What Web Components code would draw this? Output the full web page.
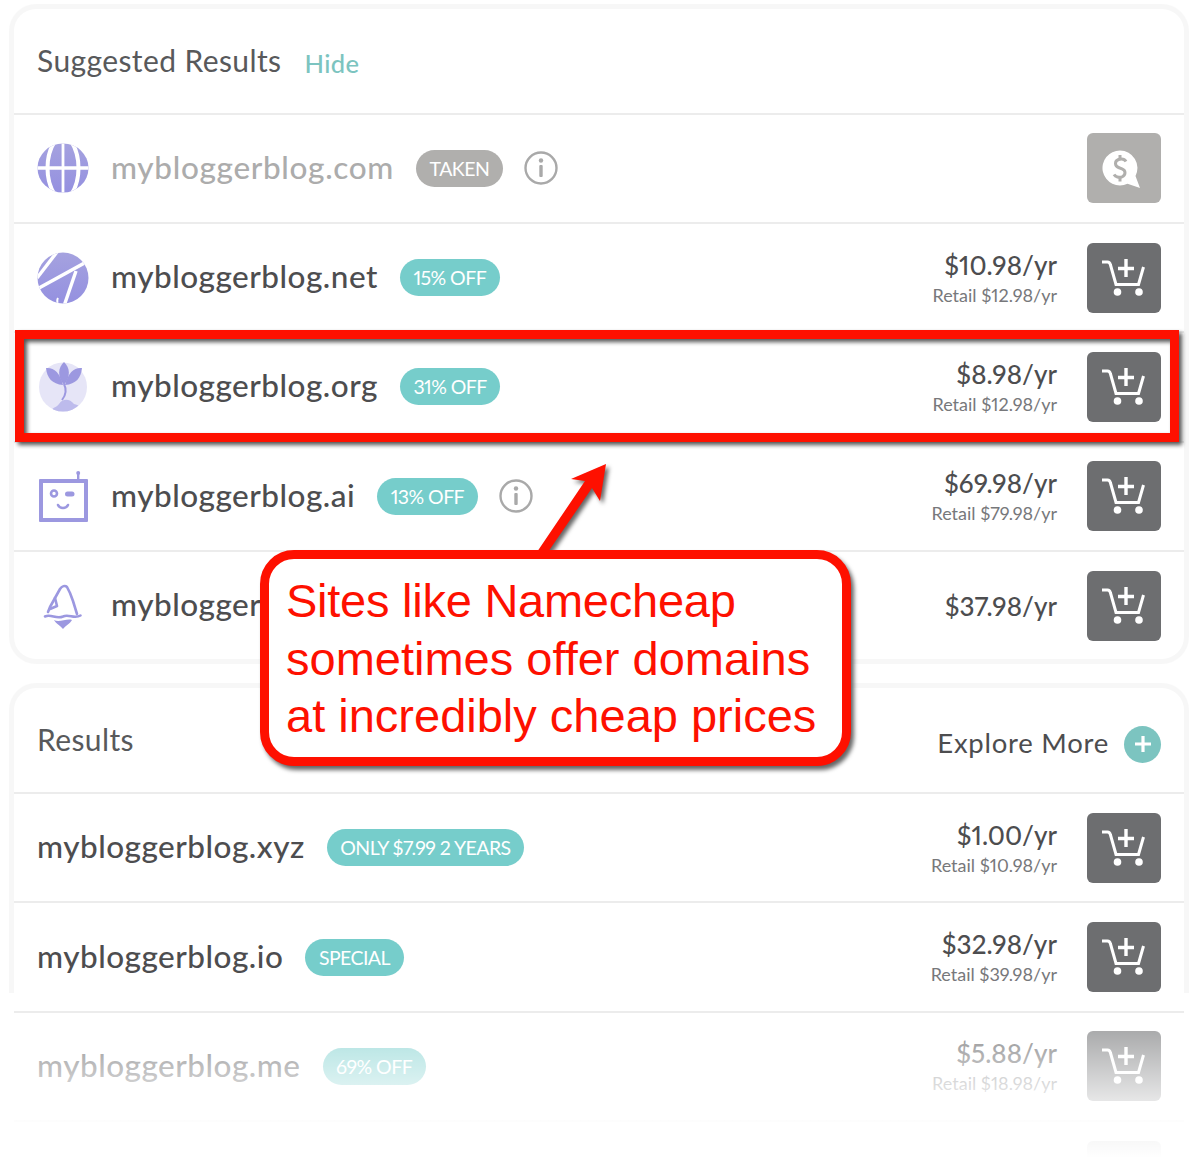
<!DOCTYPE html>
<html lang="en"><head><meta charset="utf-8"><title>Suggested Results</title>
<style>
html,body{margin:0;padding:0;background:#fff}
body{width:1200px;height:1176px;overflow:hidden;position:relative;font-family:Lato,"Open Sans",sans-serif;color:#4d4d4f}
</style></head><body>
<domain-page>
  <result-card>
    <card-head slot="head"><span>Suggested Results</span><a slot="aside">Hide</a></card-head>
    <domain-row logo="globe" name="mybloggerblog.com" pill="TAKEN" info taken></domain-row>
    <domain-row logo="slash" name="mybloggerblog.net" pill="15% OFF" price="$10.98/yr" retail="Retail $12.98/yr"></domain-row>
    <domain-row logo="plant" name="mybloggerblog.org" pill="31% OFF" price="$8.98/yr" retail="Retail $12.98/yr"></domain-row>
    <domain-row logo="bot" name="mybloggerblog.ai" pill="13% OFF" info price="$69.98/yr" retail="Retail $79.98/yr"></domain-row>
    <domain-row logo="berg" name="myblogger" price="$37.98/yr" last></domain-row>
  </result-card>
  <result-card second>
    <card-head slot="head" explore><span>Results</span></card-head>
    <domain-row name="mybloggerblog.xyz" pill="ONLY $7.99 2 YEARS" price="$1.00/yr" retail="Retail $10.98/yr"></domain-row>
    <domain-row name="mybloggerblog.io" pill="SPECIAL" price="$32.98/yr" retail="Retail $39.98/yr"></domain-row>
    <domain-row name="mybloggerblog.me" pill="69% OFF" price="$5.88/yr" retail="Retail $18.98/yr"></domain-row>
    <domain-row></domain-row>
  </result-card>
</domain-page>
<fade-veil></fade-veil>
<red-annotation></red-annotation>
<script>
function def(name, css, html){
  customElements.define(name, class extends HTMLElement{
    connectedCallback(){
      if(this.shadowRoot) return;
      const r=this.attachShadow({mode:'open'});
      r.innerHTML='<style>'+css+'</style>'+(typeof html==='function'?html(this):html);
    }
  });
}
const GRAD=id=>`<linearGradient id="${id}" x1="0" y1="0" x2="0" y2="1"><stop offset="0" stop-color="#a5a2df"/><stop offset="1" stop-color="#9490e0"/></linearGradient>`;
const LOGOS={
 globe:`<svg viewBox="0 0 52 52" width="52" height="52"><defs>${GRAD('g1')}<clipPath id="c"><ellipse cx="26" cy="26" rx="25.500" ry="24.500"/></clipPath></defs><g clip-path="url(#c)"><rect width="52" height="52" fill="url(#g1)"/><g fill="none" stroke="#fff"><path d="M0 26H52" stroke-width="3.400"/><path d="M26 0V52" stroke-width="2.800"/><path d="M18 -1C8 14 8 38 18 53" stroke-width="4"/><path d="M34 -1C44 14 44 38 34 53" stroke-width="4"/></g></g></svg>`,
 slash:`<svg viewBox="0 0 52 52" width="52" height="52"><defs>${GRAD('g2')}<clipPath id="d"><circle cx="26" cy="26" r="25.500"/></clipPath></defs><g clip-path="url(#d)"><rect width="52" height="52" fill="url(#g2)"/><g fill="none" stroke="#fff" stroke-width="3.400"><path d="M20 0L0 26"/><path d="M2 36L53 8"/><path d="M39 19L27 54"/><path d="M21 46C19 49 22 50 19 54" stroke-width="2"/></g></g></svg>`,
 plant:`<svg viewBox="0 0 52 52" width="52" height="52"><defs><clipPath id="e"><ellipse cx="26" cy="26" rx="24" ry="24.500"/></clipPath></defs><ellipse cx="26" cy="26" rx="24" ry="24.500" fill="#e6e5f7"/><g clip-path="url(#e)"><path d="M13 52C15 46 19 47 22 43C26 37 33 38 37 43C42 44 46 47 46 52Z" fill="#bdbbec"/></g><g fill="#9c98e0"><path d="M27 1C33 7 34 15 27 24C20 15 21 7 27 1Z"/><path d="M9 7C16 6 23 11 26 24C15 23 10 17 9 7Z"/><path d="M45 7C38 6 31 11 28 24C39 23 44 17 45 7Z"/></g><path d="M27 23C30 29 29 34 25 39" fill="none" stroke="#9c98e0" stroke-width="2"/></svg>`,
 bot:`<svg viewBox="0 0 52 52" width="52" height="52"><g fill="#9c98e0"><path d="M3 9H40V3h2.400V9H50Q51 9 51 10V51Q51 52 50 52H3Q2 52 2 51V10Q2 9 3 9ZM6 13V48H47V13Z" fill-rule="evenodd"/><circle cx="41.200" cy="3" r="2"/><rect x="28" y="21.500" width="9.500" height="5" rx="2.500"/></g><circle cx="17" cy="23.500" r="3" fill="none" stroke="#9c98e0" stroke-width="2.600"/><path d="M21 35C23 39 29 39 31 35" fill="none" stroke="#9c98e0" stroke-width="2.600" stroke-linecap="round"/></svg>`,
 berg:`<svg viewBox="0 0 52 52" width="52" height="52"><g fill="none" stroke="#9c98e0" stroke-width="2.600" stroke-linecap="round" stroke-linejoin="round"><path d="M11 32L13 27L18 18L23 9C25 6 28 5 30 7L33 13L36 21L40 34"/><path d="M18 18L20 26L13 29"/><path d="M8 36.500C14 33.500 19 39.500 26 36.500C32 33.500 37 39.500 43.500 35.500"/></g><path d="M17 40C22 43 30 38 35 40C33 44 29 45 26 49C23 45 19 44 17 40Z" fill="#9c98e0"/></svg>`
};
const CART=`<svg viewBox="0 0 44 38" width="44" height="38" fill="none" stroke="#fff" stroke-width="3"><path d="M0 3H5.500C7 3 8 4 8.500 6L14 25.500H36.500L41.500 8"/><path d="M24 0V18M16 9.500H32" stroke-width="3.400"/><circle cx="15.500" cy="33" r="3.800" fill="#fff" stroke="none"/><circle cx="37" cy="33" r="3.800" fill="#fff" stroke="none"/></svg>`;
const BUBBLE=`<svg viewBox="0 0 38 38" width="38" height="38" style="transform:translate(-3px,1px)"><path d="M18 .5a17.500 17.500 0 1 0 7.500 33.300L38 38L33.500 26A17.500 17.500 0 0 0 18 .5Z" fill="#fff"/><g fill="none" stroke="#b0afad" stroke-width="3"><path d="M24 11.500C22.500 9 19.500 8.500 16.500 9.500C12.500 11 12.500 16 16.500 17.500L20 18.800C24 20.300 24 25.300 20 26.800C17 27.800 13.500 27 12 24.500"/><path d="M18 5V9M18 27V31.500"/></g></svg>`;

def('domain-page',`:host{display:flex;flex-direction:column;gap:29.300px;padding:9px 16px 0 14px}`,`<slot></slot>`);
def('result-card',`:host{display:block;background:#fff;border-radius:22px;box-shadow:0 0 1px 5px #f7f7f7;overflow:hidden}
:host([second]){border-radius:22px 22px 0 0}`,`<slot name="head"></slot><slot></slot>`);
def('card-head',`:host{display:flex;align-items:center;height:103.700px;box-sizing:content-box;padding:0 23px;font-size:30px;color:#58595b;border-bottom:2px solid #ececec;gap:23px;letter-spacing:.4px}
::slotted(span){margin-top:-2px}
::slotted(a){color:#7cc4c0;font-size:25.500px;margin-top:5px;letter-spacing:.4px;font-weight:500}
.ex{margin-left:auto;display:flex;align-items:center;gap:15px;font-size:27.500px;margin-top:8px;color:#4d4d4f;letter-spacing:.75px}
.ex b{font-weight:400;margin-top:-4px}
.plus{width:37px;height:37px;border-radius:50%;background:#7cc4c0;display:flex;align-items:center;justify-content:center}`,
 el=>`<slot></slot><slot name="aside"></slot>`+(el.hasAttribute('explore')?`<div class="ex"><b>Explore More</b><span class="plus"><svg viewBox="0 0 20 20" width="20" height="20"><path d="M10 2V18M2 10H18" stroke="#fff" stroke-width="3.200"/></svg></span></div>`:''));
def('status-pill',`:host{display:inline-flex;align-items:center;height:37px;padding:0 13.500px;border-radius:19px;background:#76cdcb;color:#fff;font-size:19.500px;white-space:nowrap;font-weight:400;font-variant-numeric:proportional-nums;font-feature-settings:"pnum";letter-spacing:-.55px}
:host([taken]){background:#b0afad}`,`<slot></slot>`);
def('info-mark',`:host{display:inline-flex}`,`<svg viewBox="0 0 34 34" width="34" height="34"><circle cx="17" cy="17" r="15.500" fill="none" stroke="#a9a9a9" stroke-width="2.400"/><circle cx="17" cy="9.500" r="2.200" fill="#a9a9a9"/><rect x="15.300" y="14" width="3.400" height="12" rx="1" fill="#a9a9a9"/></svg>`);
def('price-block',`:host{display:flex;flex-direction:column;align-items:flex-end;justify-content:center;color:#4d4d4f;white-space:nowrap;font-variant-numeric:proportional-nums;font-feature-settings:"pnum"}
.p{font-size:26px;line-height:32px;font-weight:500;letter-spacing:.05px}
.r{font-size:18px;line-height:24px;color:#77787b;margin-top:2px}`,
 el=>`<div class="p">${el.getAttribute('price')}</div>`+(el.getAttribute('retail')?`<div class="r">${el.getAttribute('retail')}</div>`:''));
def('cart-button',`:host{display:flex;align-items:center;justify-content:center;width:74px;height:70px;border-radius:6px;background:#6d6e70;flex:none}
:host([taken]){background:#b0afad}`,
 el=>el.hasAttribute('taken')?BUBBLE:CART);
def('domain-row',`:host{display:flex;align-items:center;height:107.300px;padding:0 23px;border-bottom:2px solid #ececec;font-size:31.500px;color:#4d4d4f}
:host([last]){border-bottom:none}
.logo{width:52px;height:52px;margin-right:22px;flex:none;display:block;line-height:0}
.n{letter-spacing:.5px;font-weight:500;white-space:nowrap;margin-top:-3px}
:host([taken]) .n{color:#acacac;letter-spacing:.68px}
status-pill{margin-left:22px}
info-mark{margin-left:21px}
.sp{flex:1}
price-block{margin-right:30px}`,
 el=>{const a=n=>el.getAttribute(n);
  return (a('logo')?`<span class="logo">${LOGOS[a('logo')]}</span>`:'')+
  (a('name')?`<span class="n">${a('name')}</span>`:'')+
  (a('pill')?`<status-pill ${el.hasAttribute('taken')?'taken':''}>${a('pill')}</status-pill>`:'')+
  (el.hasAttribute('info')?`<info-mark></info-mark>`:'')+
  `<span class="sp"></span>`+
  (a('price')?`<price-block price="${a('price')}" retail="${a('retail')||''}"></price-block>`:'')+
  `<cart-button ${el.hasAttribute('taken')?'taken':''}></cart-button>`;});
def('fade-veil',`:host{display:block;position:absolute;left:0;right:0;top:993px;height:183px;pointer-events:none;background:linear-gradient(180deg,rgba(255,255,255,0) 0,rgba(255,255,255,0) 20px,rgba(255,255,255,.32) 21px,rgba(255,255,255,.42) 38px,rgba(255,255,255,.84) 109px,#fff 165px)}
.l,.r{position:absolute;top:0;bottom:0;width:14px;background:rgba(255,255,255,.9)}
.l{left:0}.r{right:0;width:16px}`,`<i class="l"></i><i class="r"></i>`);
def('red-annotation',`:host{display:block;position:absolute;inset:0;pointer-events:none}
.box{position:absolute;left:15px;top:330px;width:1146px;height:94px;border:9.500px solid #fe1000;filter:drop-shadow(3px 3px 2px #555)}
svg{position:absolute;left:0;top:0;filter:drop-shadow(3px 3px 2px #666)}
.call{position:absolute;left:260px;top:550px;width:573px;height:198px;border:9px solid #fe1000;border-radius:34px;background:#fff;box-shadow:3px 4px 4px #666;color:#fe1000;font:47px/57.700px "Liberation Sans",Arial,sans-serif;padding:0}
.call div{padding:13px 0 0 17px;white-space:pre}
.call span{letter-spacing:-.25px}`,
 `<div class="box"></div><svg width="1200" height="1176" viewBox="0 0 1200 1176"><path d="M537 552L585 481L571 479L606 464L600 501L592 488L548 552Z" fill="#fe1000"/></svg><div class="call"><div><span>Sites like Namecheap</span>
sometimes offer domains
at incredibly cheap prices</div></div>`);
</script>
</body></html>
